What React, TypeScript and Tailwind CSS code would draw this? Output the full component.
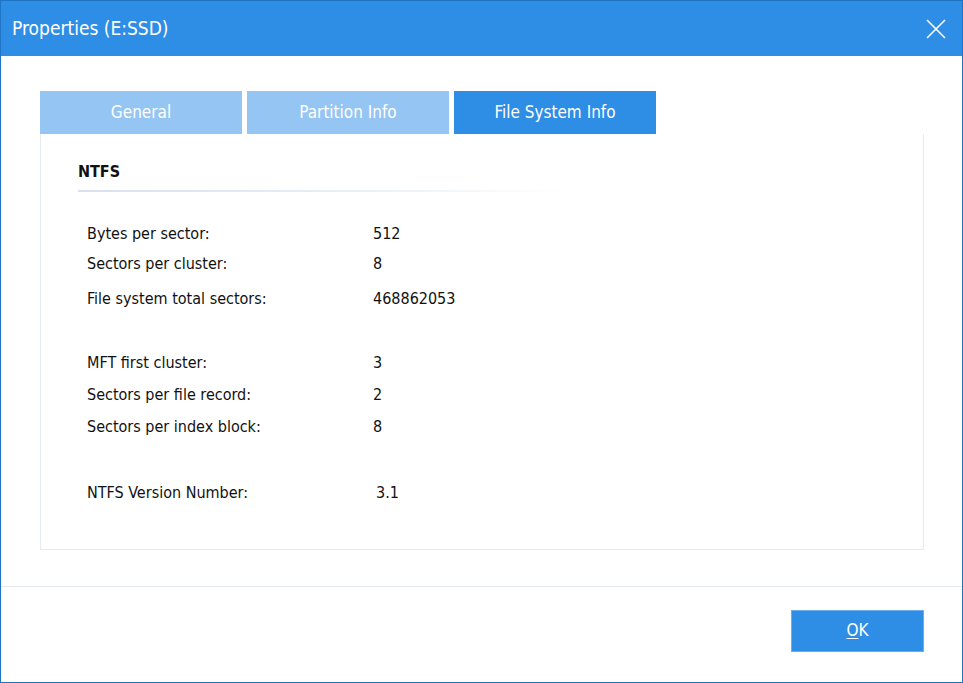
export default function App() {
  const group1 = [
    ['Bytes per sector:', '512', 'h-[30px]'],
    ['Sectors per cluster:', '8', 'h-[30px]'],
    ['File system total sectors:', '468862053', 'h-[40px]'],
  ];
  const group2 = [
    ['MFT first cluster:', '3', 'h-[32px]'],
    ['Sectors per file record:', '2', 'h-[32px]'],
    ['Sectors per index block:', '8', 'h-[32px]'],
  ];

  return (
    <div
      className="flex h-[683px] w-[963px] flex-col border border-[#1f74c4] bg-white"
      style={{ fontFamily: '"DejaVu Sans Condensed", "Liberation Sans", sans-serif' }}
    >
      {/* title bar */}
      <div className="flex h-[55px] shrink-0 items-center justify-between bg-[#2e8de4] pl-[11px] pr-[16px] text-white">
        <span className="text-[19px]">Properties (E:SSD)</span>
        <svg width="20" height="20" viewBox="0 0 20 20" stroke="white" strokeWidth="1.6">
          <path d="M1 1 L19 19 M19 1 L1 19" />
        </svg>
      </div>

      <div className="flex flex-1 flex-col px-[39px] pt-[35px]">
        {/* tabs */}
        <div className="flex gap-[5px] text-[17px] text-white">
          <div className="flex h-[43px] w-[202px] items-center justify-center bg-[#95c5f2]">General</div>
          <div className="flex h-[43px] w-[202px] items-center justify-center bg-[#95c5f2]">Partition Info</div>
          <div className="flex h-[43px] w-[202px] items-center justify-center bg-[#2e8de4]">File System Info</div>
        </div>

        <div className="h-[416px] w-[884px] border border-t-0 border-[#e6ebf0] px-[37px] pt-[26px] text-[16px] text-[#111]">
          <div className="text-[16px] font-bold">NTFS</div>
          <div className="mt-[6px] h-[2px] w-[492px] bg-gradient-to-r from-[#d8e2ee] via-[#e6edf5] to-white" />
          <div className="mt-[27px] pl-[9px]">
            {group1.map(([k, v, h]) => (
              <div key={k} className={`flex items-center ${h}`}>
                <span className="w-[286px]">{k}</span>
                <span>{v}</span>
              </div>
            ))}
            <div className="h-[28px]" />
            {group2.map(([k, v, h]) => (
              <div key={k} className={`flex items-center ${h}`}>
                <span className="w-[286px]">{k}</span>
                <span>{v}</span>
              </div>
            ))}
            <div className="h-[34px]" />
            <div className="flex h-[32px] items-center">
              <span className="w-[289px]">NTFS Version Number:</span>
              <span>3.1</span>
            </div>
          </div>
        </div>
      </div>

      {/* footer */}
      <div className="flex h-[96px] shrink-0 items-start justify-end border-t border-[#e3e8ee] pr-[38px] pt-[23px]">
        <button className="flex h-[42px] w-[133px] items-center justify-center border border-[#6aaef0] bg-[#2e8de4] text-[17px] text-white">
          <span className="underline underline-offset-2">O</span>K
        </button>
      </div>
    </div>
  );
}
